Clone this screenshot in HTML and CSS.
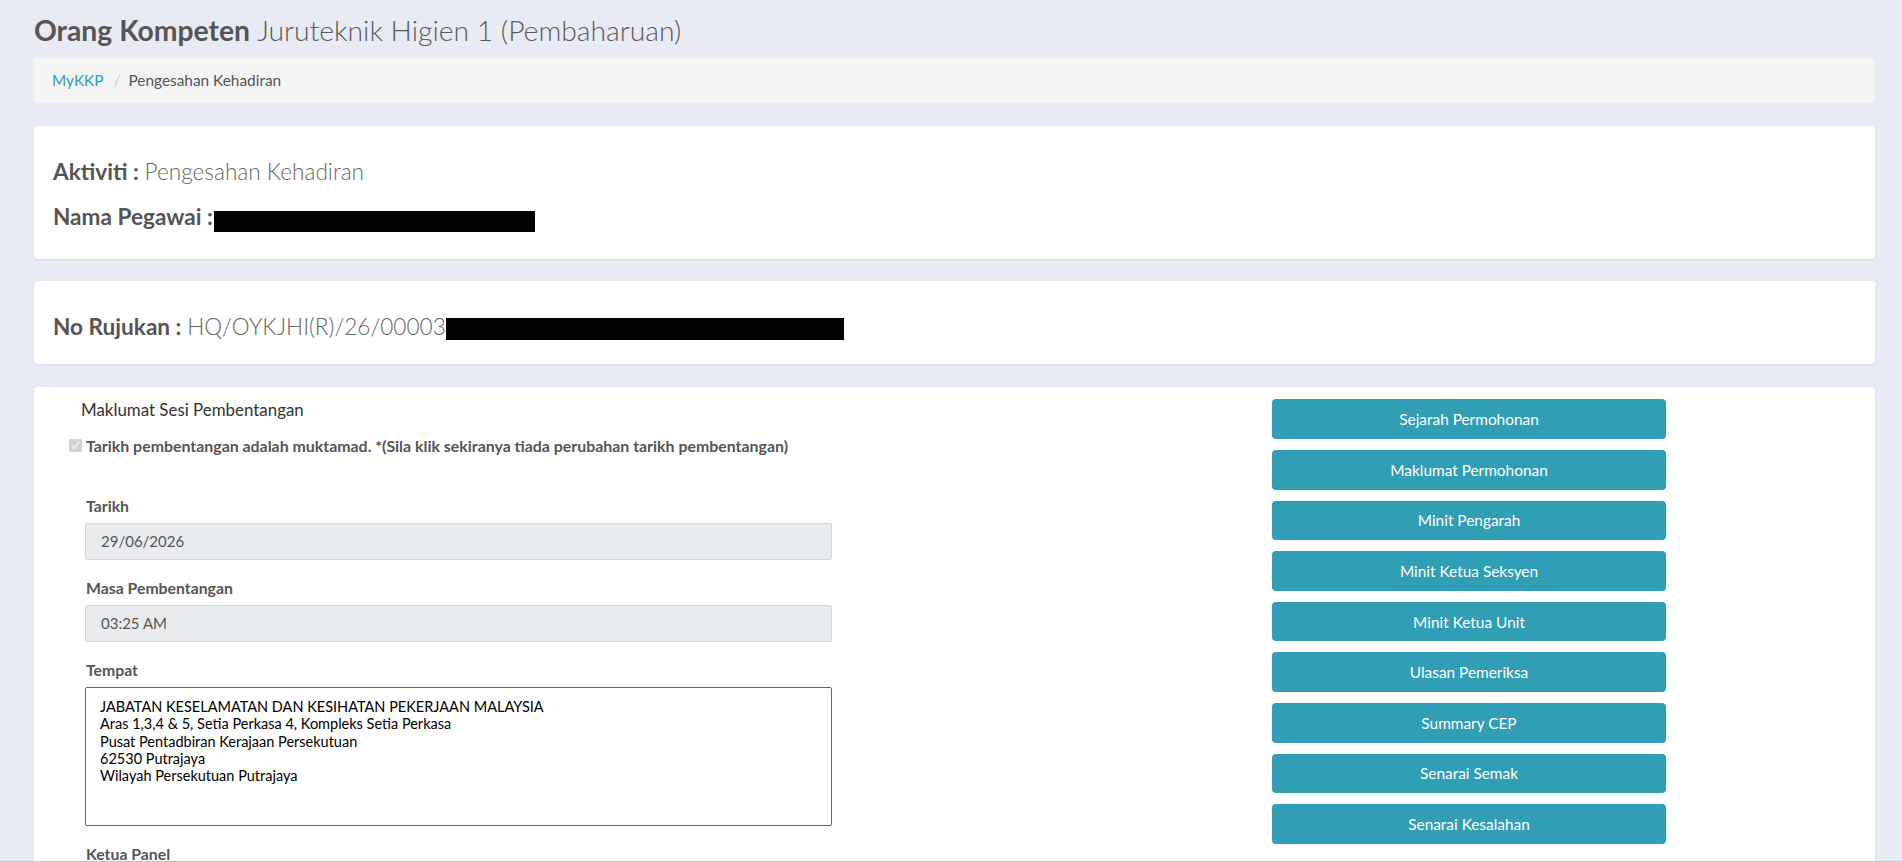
FILE: index.html
```html
<!DOCTYPE html>
<html lang="ms">
<head>
<meta charset="utf-8">
<title>Orang Kompeten - Pengesahan Kehadiran</title>
<link rel="stylesheet" href="styles.css">
</head>
<body>
<div class="page">
  <h1 class="page-title"><b>Orang Kompeten</b> <span class="subtitle">Juruteknik Higien 1 (Pembaharuan)</span></h1>

  <ol class="breadcrumb">
    <li><a href="#">MyKKP</a></li>
    <li class="active">Pengesahan Kehadiran</li>
  </ol>

  <section class="card card-info">
    <h4 class="info-line"><b>Aktiviti :</b> <span class="val">Pengesahan Kehadiran</span></h4>
    <h4 class="info-line"><b>Nama Pegawai :</b><span class="redact redact-name"></span></h4>
  </section>

  <section class="card card-ref">
    <h4 class="info-line"><b>No Rujukan :</b> <span class="val">HQ/OYKJHI(R)/26/00003</span><span class="redact redact-ref"></span></h4>
  </section>

  <section class="card card-session">
    <div class="session-main">
      <h5 class="session-title">Maklumat Sesi Pembentangan</h5>
      <label class="confirm"><input type="checkbox" checked disabled><span>Tarikh pembentangan adalah muktamad. *(Sila klik sekiranya tiada perubahan tarikh pembentangan)</span></label>

      <div class="form">
        <div class="form-group">
          <label class="form-label">Tarikh</label>
          <input class="form-control" type="text" value="29/06/2026" readonly>
        </div>
        <div class="form-group">
          <label class="form-label">Masa Pembentangan</label>
          <input class="form-control" type="text" value="03:25 AM" readonly>
        </div>
        <div class="form-group">
          <label class="form-label">Tempat</label>
          <textarea class="form-area" readonly>JABATAN KESELAMATAN DAN KESIHATAN PEKERJAAN MALAYSIA
Aras 1,3,4 &amp; 5, Setia Perkasa 4, Kompleks Setia Perkasa
Pusat Pentadbiran Kerajaan Persekutuan
62530 Putrajaya
Wilayah Persekutuan Putrajaya</textarea>
        </div>
        <div class="form-group">
          <label class="form-label">Ketua Panel</label>
          <input class="form-control" type="text" value="" readonly>
        </div>
      </div>
    </div>

    <div class="session-actions">
      <button class="btn-info" type="button">Sejarah Permohonan</button>
      <button class="btn-info" type="button">Maklumat Permohonan</button>
      <button class="btn-info" type="button">Minit Pengarah</button>
      <button class="btn-info" type="button">Minit Ketua Seksyen</button>
      <button class="btn-info" type="button">Minit Ketua Unit</button>
      <button class="btn-info" type="button">Ulasan Pemeriksa</button>
      <button class="btn-info" type="button">Summary CEP</button>
      <button class="btn-info" type="button">Senarai Semak</button>
      <button class="btn-info" type="button">Senarai Kesalahan</button>
    </div>
  </section>
</div>
<div class="window-edge"></div>
</body>
</html>
```

FILE: styles.css
```css
html, body {
  height: 100%;
  overflow: hidden;
}

body {
  margin: 0;
  background: #e8ebf4;
  font-family: Lato, "Noto Sans", "Liberation Sans", sans-serif;
  color: #555;
}

.page {
  padding: 0 27px 0 34px;
}

/* Page heading */
.page-title {
  margin: 0;
  padding-top: 14px;
  font-size: 28.3px;
  line-height: 1.2;
  font-weight: 400;
  color: #555;
}

.page-title b {
  font-weight: 700;
}

.page-title .subtitle {
  font-weight: 300;
  color: #5a5a5a;
}

/* Breadcrumb */
.breadcrumb {
  list-style: none;
  margin: 10px 0 0;
  padding: 12px 18px;
  background: #f4f4f4;
  border-radius: 4px;
  display: flex;
  font-size: 15.4px;
  line-height: 21px;
}

.breadcrumb li + li::before {
  content: "/";
  color: #ccc;
  padding: 0 8px 0 10px;
}

.breadcrumb a {
  color: #2f9fc2;
  text-decoration: none;
}

.breadcrumb .active {
  color: #555;
}

/* Cards */
.card {
  background: #fff;
  border-radius: 4px;
  box-shadow: 0 1px 2px rgba(40, 50, 90, 0.10);
  margin-top: 23px;
}

.card-info {
  padding: 33px 19px 27px;
}

.card-ref {
  margin-top: 22px;
  padding: 33px 19px 24px;
}

.info-line {
  margin: 0;
  font-size: 22.6px;
  line-height: 26.4px;
  font-weight: 400;
  color: #555;
}

.info-line + .info-line {
  margin-top: 18.6px;
}

.info-line b {
  font-weight: 700;
}

.info-line .val {
  font-weight: 300;
  color: #666;
}

.redact {
  display: inline-block;
  background: #000;
}

.redact-name {
  width: 321px;
  height: 21px;
  vertical-align: -7px;
  margin-left: 1px;
}

.redact-ref {
  width: 398px;
  height: 22px;
  vertical-align: -5px;
}

/* Session section */
.card-session {
  display: flex;
  align-items: flex-start;
  min-height: 600px;
}

.session-main {
  flex: 1;
  padding-top: 11px;
}

.session-title {
  margin: 0 0 0 47px;
  font-size: 16.9px;
  line-height: 24px;
  font-weight: 400;
  color: #333;
}

.confirm {
  display: flex;
  align-items: center;
  margin: 13px 0 0 35px;
  font-size: 15.9px;
  line-height: 21px;
  font-weight: 700;
  color: #555;
}

.confirm input {
  width: 13px;
  height: 13px;
  margin: 0 4px 0 0;
}

.form {
  width: 747px;
  margin: 39px 0 0 51px;
}

.form-group + .form-group {
  margin-top: 17.5px;
}

.form-label {
  display: block;
  margin-bottom: 6.5px;
  padding-left: 1px;
  font-size: 15.8px;
  line-height: 21px;
  font-weight: 700;
  color: #555;
}

.form-control {
  display: block;
  box-sizing: border-box;
  width: 100%;
  height: 37px;
  padding: 0 15px;
  border: 1px solid #d2d6db;
  border-radius: 2px;
  background: #e9ecef;
  font-family: inherit;
  font-size: 15px;
  color: #555;
  outline: none;
}

.form-area {
  display: block;
  box-sizing: border-box;
  width: 100%;
  height: 139px;
  padding: 10px 14px;
  border: 1px solid #666;
  border-radius: 2px;
  background: #fff;
  font-family: inherit;
  font-size: 14.5px;
  line-height: 1.2;
  color: #000;
  resize: none;
  outline: none;
}

.session-actions {
  width: 394px;
  margin: 12px 209px 0 0;
  display: flex;
  flex-direction: column;
  gap: 11px;
}

.btn-info {
  height: 39.6px;
  border: 0;
  border-radius: 4px;
  background: #309eb5;
  color: #fff;
  font-family: inherit;
  font-size: 15.4px;
  font-weight: 400;
  cursor: pointer;
}

/* Bottom edge of the browser frame */
.window-edge {
  position: fixed;
  left: 0;
  right: 0;
  bottom: 0;
  height: 1px;
  background: #c4c4c4;
}
```
